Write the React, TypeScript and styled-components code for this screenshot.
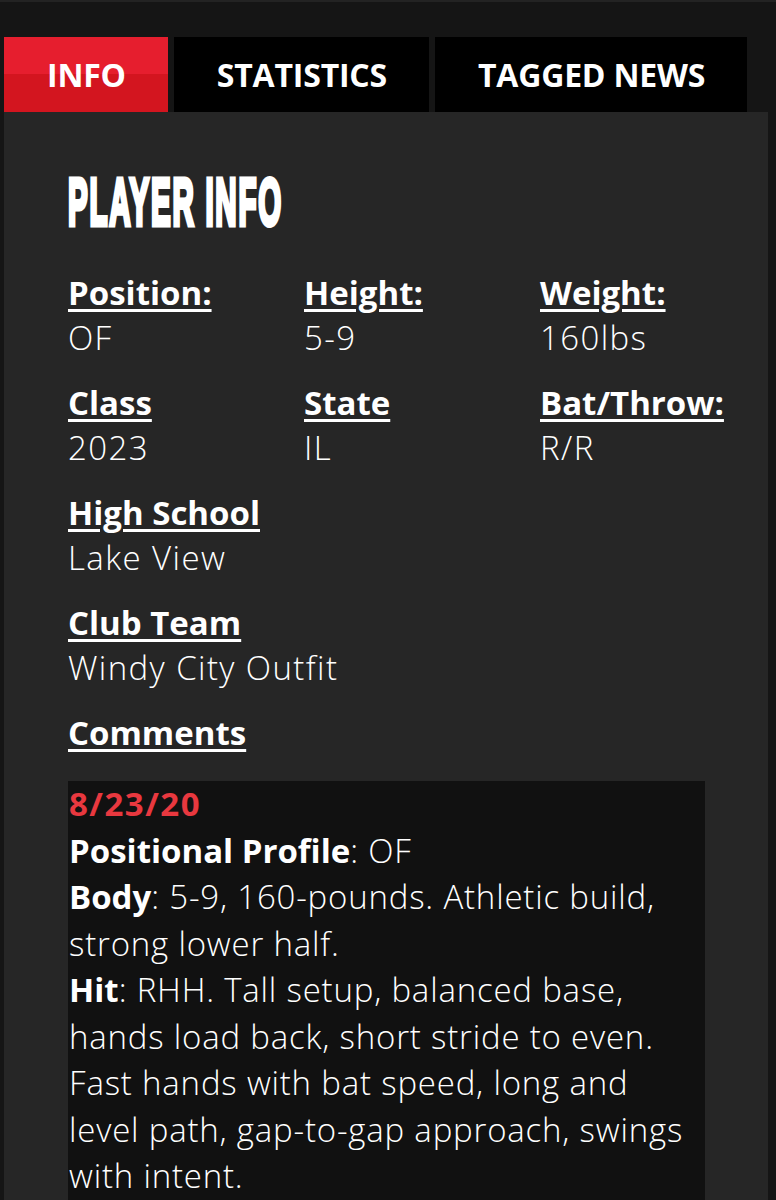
import React from 'react';
import styled, { createGlobalStyle } from 'styled-components';

const GlobalStyle = createGlobalStyle`
  body {
    margin: 0;
    background: #151515;
    font-family: 'Open Sans', 'Noto Sans', sans-serif;
    color: #ffffff;
  }
`;

const Page = styled.div`
  min-height: 1200px;
  border-top: 2px solid #232323;
  padding: 35px 8px 0 4px;
  box-sizing: border-box;
`;

const TabBar = styled.nav`
  display: flex;
  gap: 6px;
`;

const Tab = styled.button<{ active?: boolean }>`
  border: none;
  margin: 0;
  height: 75px;
  padding: 0 42px 0 43px;
  background: ${props =>
    props.active ? 'linear-gradient(180deg, #e61e2e 0%, #e61e2e 50%, #d3151f 50%, #d3151f 100%)' : '#000000'};
  color: #ffffff;
  font-family: 'Open Sans', 'Noto Sans', sans-serif;
  font-size: 32px;
  font-weight: 700;
  letter-spacing: -0.2px;
  text-transform: uppercase;
  cursor: pointer;
`;

const Panel = styled.section`
  background: #262626;
  padding: 56px 63px 0 64px;
  min-height: 1088px;
  box-sizing: border-box;
  display: flex;
  flex-direction: column;
`;

const Heading = styled.h2`
  margin: 0 0 35px;
  align-self: flex-start;
  font-family: 'Liberation Sans', Arial, sans-serif;
  font-size: 67px;
  line-height: 67px;
  font-weight: 700;
  text-transform: uppercase;
  white-space: nowrap;
  transform: scaleX(0.44);
  transform-origin: left center;
  -webkit-text-stroke: 5px #ffffff;
  letter-spacing: 4px;
`;

const Fields = styled.div`
  display: grid;
  grid-template-columns: repeat(3, 236px);
  row-gap: 20px;
`;

const Field = styled.div<{ wide?: boolean }>`
  grid-column: ${props => (props.wide ? '1 / -1' : 'auto')};
  display: flex;
  flex-direction: column;
  align-items: flex-start;
  font-size: 33px;
  line-height: 45px;
`;

const Label = styled.span`
  font-weight: 700;
  white-space: nowrap;
  text-decoration: underline;
  text-decoration-thickness: 3px;
  text-underline-offset: 4px;
`;

const Value = styled.span`
  font-weight: 300;
  letter-spacing: 1.4px;
`;

const CommentBox = styled.div`
  flex: 1;
  margin-top: 26px;
  background: #111111;
  padding: 0 4px 20px 1px;
  font-size: 33px;
  line-height: 46.5px;
  font-weight: 300;
  letter-spacing: 0.8px;
`;

const CommentDate = styled.div`
  color: #e8383f;
  font-weight: 700;
  letter-spacing: 1.5px;
`;

const Line = styled.div``;

const Key = styled.b`
  font-weight: 700;
  letter-spacing: 0;
`;

const fields = [
  { label: 'Position:', value: 'OF' },
  { label: 'Height:', value: '5-9' },
  { label: 'Weight:', value: '160lbs' },
  { label: 'Class', value: '2023' },
  { label: 'State', value: 'IL' },
  { label: 'Bat/Throw:', value: 'R/R' },
];

const App: React.FC = () => {
  return (
    <Page>
      <GlobalStyle />
      <TabBar>
        <Tab active>Info</Tab>
        <Tab>Statistics</Tab>
        <Tab>Tagged News</Tab>
      </TabBar>

      <Panel>
        <Heading>Player Info</Heading>

        <Fields>
          {fields.map(f => (
            <Field key={f.label}>
              <Label>{f.label}</Label>
              <Value>{f.value}</Value>
            </Field>
          ))}
          <Field wide>
            <Label>High School</Label>
            <Value>Lake View</Value>
          </Field>
          <Field wide>
            <Label>Club Team</Label>
            <Value>Windy City Outfit</Value>
          </Field>
          <Field wide>
            <Label>Comments</Label>
          </Field>
        </Fields>

        <CommentBox>
          <CommentDate>8/23/20</CommentDate>
          <Line>
            <Key>Positional Profile</Key>: OF
          </Line>
          <Line>
            <Key>Body</Key>: 5-9, 160-pounds. Athletic build, strong lower half.
          </Line>
          <Line>
            <Key>Hit</Key>: RHH. Tall setup, balanced base, hands load back, short stride to even. Fast hands
            with bat speed, long and level path, gap-to-gap approach, swings with intent.
          </Line>
        </CommentBox>
      </Panel>
    </Page>
  );
};

export default App;
